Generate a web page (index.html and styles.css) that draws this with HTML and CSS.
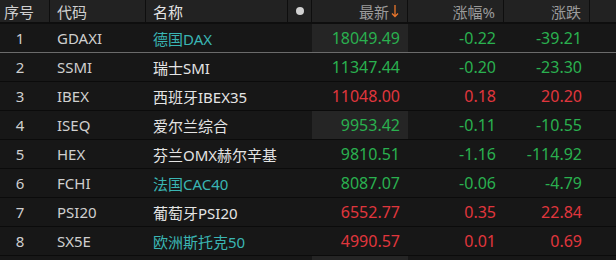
FILE: index.html
```html
<!DOCTYPE html>
<html lang="zh">
<head>
<meta charset="utf-8">
<link rel="stylesheet" href="styles.css">
</head>
<body>
<div class="table">
  <div class="row head">
    <div class="c no">序号</div>
    <div class="c code">代码</div>
    <div class="c name">名称</div>
    <div class="c dot"><span class="dotmark"></span></div>
    <div class="c hnum">最新<svg class="arrow" width="8" height="14" viewBox="0 0 8 14"><path d="M4 1 V12.5 M1 9.5 L4 12.5 L7 9.5" fill="none" stroke="#e8762c" stroke-width="1.3"/></svg></div>
    <div class="c hnum">涨幅%</div>
    <div class="c hnum">涨跌</div>
    <div class="c last"></div>
  </div>
  <div class="row sel">
    <div class="c no">1</div><div class="c code">GDAXI</div><div class="c name cyan">德国DAX</div><div class="c dot"></div>
    <div class="c num g hl">18049.49</div><div class="c num g">-0.22</div><div class="c num g">-39.21</div><div class="c last"></div>
  </div>
  <div class="row">
    <div class="c no">2</div><div class="c code">SSMI</div><div class="c name">瑞士SMI</div><div class="c dot"></div>
    <div class="c num g">11347.44</div><div class="c num g">-0.20</div><div class="c num g">-23.30</div><div class="c last"></div>
  </div>
  <div class="row">
    <div class="c no">3</div><div class="c code">IBEX</div><div class="c name">西班牙IBEX35</div><div class="c dot"></div>
    <div class="c num r">11048.00</div><div class="c num r">0.18</div><div class="c num r">20.20</div><div class="c last"></div>
  </div>
  <div class="row">
    <div class="c no">4</div><div class="c code">ISEQ</div><div class="c name">爱尔兰综合</div><div class="c dot"></div>
    <div class="c num g hl">9953.42</div><div class="c num g">-0.11</div><div class="c num g">-10.55</div><div class="c last"></div>
  </div>
  <div class="row">
    <div class="c no">5</div><div class="c code">HEX</div><div class="c name">芬兰OMX赫尔辛基</div><div class="c dot"></div>
    <div class="c num g">9810.51</div><div class="c num g">-1.16</div><div class="c num g">-114.92</div><div class="c last"></div>
  </div>
  <div class="row">
    <div class="c no">6</div><div class="c code">FCHI</div><div class="c name cyan">法国CAC40</div><div class="c dot"></div>
    <div class="c num g">8087.07</div><div class="c num g">-0.06</div><div class="c num g">-4.79</div><div class="c last"></div>
  </div>
  <div class="row">
    <div class="c no">7</div><div class="c code">PSI20</div><div class="c name">葡萄牙PSI20</div><div class="c dot"></div>
    <div class="c num r">6552.77</div><div class="c num r">0.35</div><div class="c num r">22.84</div><div class="c last"></div>
  </div>
  <div class="row">
    <div class="c no">8</div><div class="c code">SX5E</div><div class="c name cyan">欧洲斯托克50</div><div class="c dot"></div>
    <div class="c num r">4990.57</div><div class="c num r">0.01</div><div class="c num r">0.69</div><div class="c last"></div>
  </div>
  <div class="row">
    <div class="c no"></div><div class="c code"></div><div class="c name"></div><div class="c dot"></div>
    <div class="c num hl"></div><div class="c num"></div><div class="c num"></div><div class="c last"></div>
  </div>
</div>
</body>
</html>
```
FILE: styles.css
```css
html, body {
  margin: 0;
  padding: 0;
  background: #171717;
  overflow: hidden;
}
body {
  width: 616px;
  height: 260px;
  font-family: "Noto Sans", "Noto Sans CJK SC", sans-serif;
  font-size: 15px;
  color: #d6d6d6;
}
.table {
  display: flex;
  flex-direction: column;
  height: 260px;
  overflow: hidden;
}
.row {
  display: grid;
  grid-template-columns: 50px 96px 142px 24px 96px 96px 86px 26px;
  height: 29px;
  flex: none;
  box-sizing: border-box;
  border-bottom: 1px solid #0b0b0b;
}
.row.sel {
  border-bottom-color: #6b6b6b;
}
.row.head {
  height: 24px;
  background: #222222;
  border-bottom: 2px solid #0e0e0e;
  color: #9b9b9b;
}
.c {
  display: flex;
  align-items: center;
  white-space: nowrap;
  box-sizing: border-box;
  padding-left: 7px;
}
.head .c {
  border-right: 1px solid #0e0e0e;
}
.head .c.last {
  border-right: none;
}
.head .no {
  padding-left: 4px;
  justify-content: flex-start;
}
.no {
  justify-content: center;
  padding-left: 0;
  padding-right: 10px;
  color: #cfcfcf;
}
.code {
  color: #cfcfcf;
}
.name {
  color: #e4e4e4;
}
.name.cyan {
  color: #3ab5b3;
}
.dot {
  justify-content: center;
  padding-left: 0;
}
.dotmark {
  width: 8px;
  height: 8px;
  border-radius: 50%;
  background: #d2d2d2;
}
.hnum,
.num {
  justify-content: flex-end;
  padding-left: 0;
  padding-right: 8px;
}
.num {
  font-size: 16px;
}
.arrow {
  margin-left: 2px;
}
.hl {
  background: #252525;
}
.g {
  color: #2ab04f;
}
.r {
  color: #e0363d;
}
```
